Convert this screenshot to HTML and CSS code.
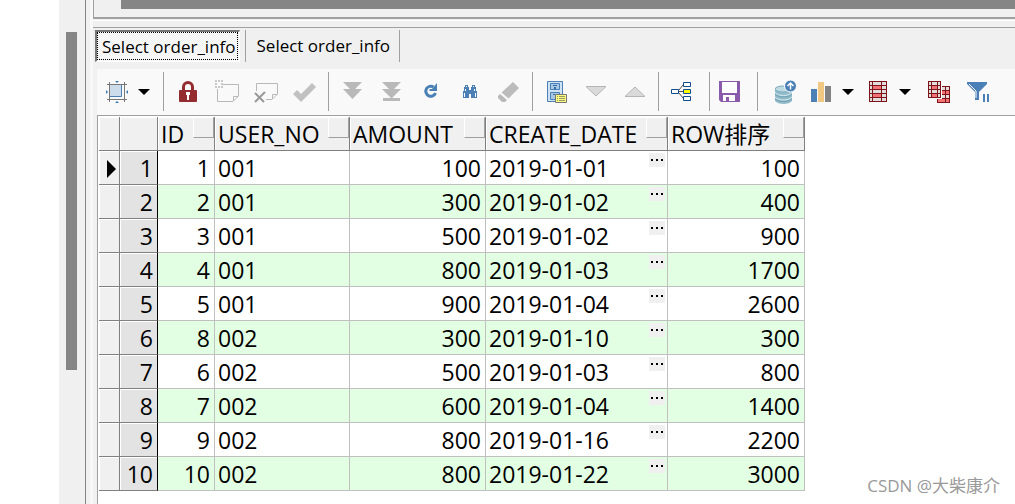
FILE: index.html
```
<!DOCTYPE html>
<html lang="zh-CN">
<head>
  <meta charset="UTF-8">
  <meta name="viewport" content="width=device-width, initial-scale=1.0">
  <title>Select order_info</title>
  <link rel="stylesheet" href="styles.css">
</head>
<body>
  <div class="page-margin"></div>
  <aside class="side-panel">
    <div class="scroll-thumb"></div>
  </aside>
  <div class="splitter"></div>

  <main class="workspace">
    <div class="editor-edge">
      <div class="editor-scrollbar"></div>
    </div>

    <section class="results">
      <nav class="tabs">
        <button type="button" class="tab active"><span>Select order_info</span></button>
        <button type="button" class="tab">Select order_info</button>
      </nav>

      <div class="result-body">
        <!-- Toolbar -->
        <div class="toolbar">
          <div class="tool-group first">
            <button type="button" class="tool split" aria-label="Grid size">
              <svg width="22" height="22" viewBox="0 0 22 22">
                <rect x="4" y="4" width="12" height="12" fill="#cddcea"/>
                <path d="M4 3.5H15.500V15.500H4" fill="none" stroke="#4a80b5"/>
                <path d="M1 3.500H21M1 18.500H21M3.500 1V21M18.500 1V21" stroke="#777" fill="none"/>
                <path d="M9 0h4l-2 2zM9 22h4l-2-2zM0 9v4l2-2zM22 9v4l-2-2z" fill="#3f78b3"/>
              </svg>
            </button>
            <button type="button" class="drop" aria-label="Grid size menu"><span class="caret"></span></button>
          </div>

          <div class="tool-group">
            <button type="button" class="tool" aria-label="Lock">
              <svg width="18" height="22" viewBox="0 0 18 22">
                <path d="M4.500 10V6a4.500 4.500 0 0 1 9 0v4" fill="none" stroke="#932d30" stroke-width="3"/>
                <rect y="9" width="18" height="12" rx="1" fill="#932d30"/>
                <path d="M7 11h4v3h-1v5H8v-5H7z" fill="#fff"/>
              </svg>
            </button>
            <button type="button" class="tool" aria-label="Insert record">
              <svg width="26" height="26" viewBox="0 0 26 26">
                <path d="M3.500 10V22.500H19L24.500 17V5.500H9M19.500 22V17.500H24" fill="none" stroke="#b8b8b8"/>
                <path d="M1 1h2v2H1zM4 1h2v2H4zM7 1h2v2H7zM1 4h2v2H1zM7 4h2v2H7zM1 7h2v2H1zM4 7h2v2H4zM7 7h2v2H7z" fill="#c8c8c8"/>
              </svg>
            </button>
            <button type="button" class="tool" aria-label="Delete record">
              <svg width="24" height="22" viewBox="0 0 24 22">
                <path d="M2.500 10V2.500H23.500V13L18 18.500H12M18.500 18V13.500H23" fill="none" stroke="#b8b8b8"/>
                <path d="M1 12L10 21M11 11L1 21" stroke="#999" stroke-width="2" fill="none"/>
              </svg>
            </button>
            <button type="button" class="tool" aria-label="Post changes">
              <svg width="24" height="20" viewBox="0 0 24 20">
                <path d="M0 12l4-4 4 4L19 1l4 4L8 20z" fill="#c1c1c1"/>
              </svg>
            </button>
          </div>

          <div class="tool-group">
            <button type="button" class="tool" aria-label="Fetch next page">
              <svg width="20" height="20" viewBox="0 0 20 20">
                <path d="M0 0h19l-7 7h7l-9.500 10L0 7h7z" fill="#b9b9b9"/>
              </svg>
            </button>
            <button type="button" class="tool" aria-label="Fetch last page">
              <svg width="20" height="20" viewBox="0 0 20 20">
                <path d="M0 0h19l-7 7h7l-9 9h8v3H1v-3h8L0 7h7z" fill="#b9b9b9"/>
              </svg>
            </button>
            <button type="button" class="tool" aria-label="Refresh">
              <svg width="16" height="18" viewBox="0 0 16 18">
                <path d="M10.500 4A5 5 0 1 0 12.500 10" fill="none" stroke="#4a80b5" stroke-width="3"/>
                <path d="M14 0v8H6.500V6H9L11.500 3z" fill="#4a80b5"/>
              </svg>
            </button>
            <button type="button" class="tool" aria-label="Find">
              <svg width="16" height="16" viewBox="0 0 16 16">
                <path d="M3 1h3v2h1v3h2V3h1V1h3v2h1v4h1v7H9v-4H7v4H1V7h1V3h1z" fill="#4a80b5"/>
                <path d="M4 2h1v1H4zM11 2h1v1h-1zM3 5h1v2H3zM12 5h1v2h-1zM2 9h1v4H2zM13 9h1v4h-1z" fill="#fff"/>
              </svg>
            </button>
            <button type="button" class="tool" aria-label="Clear">
              <svg width="24" height="22" viewBox="0 0 24 22">
                <path d="M16 1l6 6-10.500 10.500-7-6z" fill="#bcbcbc"/>
                <path d="M3 13l7 6-2 2H5l-4-4v-2z" fill="#b9b9b9"/>
              </svg>
            </button>
          </div>

          <div class="tool-group">
            <button type="button" class="tool" aria-label="Single record view">
              <svg width="20" height="22" viewBox="0 0 20 22">
                <path d="M.5.500H15.500V20.500H.500z" fill="#cfe3f5" stroke="#4a80b5"/>
                <path d="M3.500 2.500H12.500V8.500H3.500zM3.500 11.500H12.500V18.500H3.500z" fill="#a9c8e4" stroke="#4a80b5"/>
                <path d="M6 4h4v1H6zM7 6h2v2H7zM6 13h2v1H6z" fill="#2f6ca8"/>
                <path d="M8.500 13.500H19.500V21.500H8.500z" fill="#ffff80" stroke="#777"/>
                <path d="M10 15.500h1M12 15.500h6M10 17.500h1M12 17.500h6M10 19.500h1M12 19.500h6" stroke="#999966"/>
              </svg>
            </button>
            <button type="button" class="tool" aria-label="Next record">
              <svg width="22" height="20" viewBox="0 0 22 20">
                <path d="M1 4.500H21L11 14z" fill="#dadada" stroke="#b5b5b5"/>
              </svg>
            </button>
            <button type="button" class="tool" aria-label="Previous record">
              <svg width="22" height="20" viewBox="0 0 22 20">
                <path d="M1 14.500H21L11 5z" fill="#dadada" stroke="#b5b5b5"/>
              </svg>
            </button>
          </div>

          <div class="tool-group loose">
            <button type="button" class="tool" aria-label="Linked query">
              <svg width="22" height="22" viewBox="0 0 22 22">
                <path d="M7 10.500h5M8 9L12 4M8 12l4 5" stroke="#555" fill="none"/>
                <path d="M.5 8.500h7v4h-7zM12.500 1.500h7v4h-7zM12.500 15.500h7v4h-7z" fill="#fff" stroke="#0f4d8c"/>
                <path d="M12.500 8.500h7v4h-7z" fill="#ff0" stroke="#0f4d8c"/>
              </svg>
            </button>
          </div>

          <div class="tool-group save">
            <button type="button" class="tool" aria-label="Export data">
              <svg width="21" height="21" viewBox="0 0 21 21">
                <path d="M0 0h21v21H2L0 19z" fill="#8b5bab"/>
                <path d="M3 1h15v11H3zM4 14h12v6H4z" fill="#fff"/>
                <path d="M7 16h3v4H7zM19 1h1v2h-1z" fill="#8b5bab"/>
              </svg>
            </button>
          </div>

          <div class="tool-group last">
            <button type="button" class="tool" aria-label="Send to database">
              <svg width="22" height="24" viewBox="0 0 22 24">
                <path d="M0 9v12c3 4 14 4 17 0V9z" fill="#93bccb"/>
                <ellipse cx="8.500" cy="9" rx="8.500" ry="3" fill="#bfdce5" stroke="#79a9bb"/>
                <path d="M0 12.500c3 4 14 4 17 0M0 17c3 4 14 4 17 0" fill="none" stroke="#d6e9ef"/>
                <path d="M0 14c3 4 14 4 17 0M0 18.500c3 4 14 4 17 0" fill="none" stroke="#6d9fb2"/>
                <circle cx="15.500" cy="6" r="6" fill="#4a80b5" stroke="#fff"/>
                <path d="M15.500 9.500V3M12.500 6l3-3 3 3" fill="none" stroke="#fff" stroke-width="1.500"/>
              </svg>
            </button>
            <button type="button" class="tool split" aria-label="Chart">
              <svg width="20" height="20" viewBox="0 0 20 20">
                <path d="M0 7h6v13H0z" fill="#4a80b5"/>
                <path d="M7 0h6v20H7z" fill="#f0c882"/>
                <path d="M14 4h6v16h-6z" fill="#838383"/>
              </svg>
            </button>
            <button type="button" class="drop" aria-label="Chart menu"><span class="caret"></span></button>
            <button type="button" class="tool split" aria-label="Table">
              <svg width="18" height="22" viewBox="0 0 18 22">
                <path d="M0 0h18v21H0z" fill="#7d1518"/>
                <path d="M1 1h2v3H1zM4 1h8v3H4zM13 1h4v3h-4zM1 9h2v3H1zM4 9h8v3H4zM13 9h4v3h-4zM1 17h2v3H1zM4 17h8v3H4zM13 17h4v3h-4zM1 5h2v3H1zM13 5h4v3h-4zM1 13h2v3H1zM13 13h4v3h-4z" fill="#e2dddd"/>
                <path d="M4 5h8v3H4zM4 9h8v3H4zM4 17h8v3H4z" fill="#f27278"/>
                <path d="M4 9h8v3H4z" fill="#e2dddd"/>
                <path d="M4 13h8v3H4z" fill="#f27278"/>
                <path d="M4 17h8v3H4z" fill="#e2dddd"/>
              </svg>
            </button>
            <button type="button" class="drop" aria-label="Table menu"><span class="caret"></span></button>
            <button type="button" class="tool" aria-label="Copy table">
              <svg width="22" height="22" viewBox="0 0 22 22">
                <path d="M9 5h13v17H9z" fill="#7d1518"/>
                <path d="M10 10h7v3h-7zM18 10h3v3h-3zM10 18h7v3h-7zM18 18h3v3h-3z" fill="#f27278"/>
                <path d="M14 6h3v3h-3zM18 6h3v3h-3zM10 14h7v3h-7zM18 14h3v3h-3z" fill="#e2dddd"/>
                <path d="M0 0h14v18H0z" fill="#f9f9f9"/>
                <path d="M0 0h13v17H0z" fill="#7d1518"/>
                <path d="M1 1h2v3H1zM4 1h5v3H4zM10 1h2v3h-2zM1 9h2v3H1zM4 9h5v3H4zM10 9h2v3h-2zM1 5h2v3H1zM10 5h2v3h-2zM1 13h2v3H1zM10 13h2v3h-2z" fill="#e2dddd"/>
                <path d="M4 5h5v3H4zM4 13h5v3H4z" fill="#f27278"/>
              </svg>
            </button>
            <button type="button" class="tool" aria-label="Filter">
              <svg width="22" height="22" viewBox="0 0 22 22">
                <path d="M0 1h20v2l-8 8v8H8v-8L0 3z" fill="#4a80b5"/>
                <path d="M2 3l7 7v7" fill="none" stroke="#fff"/>
                <path d="M16 13h2v8h-2zM20 13h2v8h-2z" fill="#4a80b5"/>
              </svg>
            </button>
          </div>
        </div>

        <!-- Query result -->
        <div class="grid-wrap">
          <table class="grid">
            <colgroup>
              <col class="col-mark"><col class="col-num"><col class="col-id"><col class="col-user">
              <col class="col-amount"><col class="col-date"><col class="col-row">
            </colgroup>
            <thead>
              <tr>
                <th></th>
                <th></th>
                <th>ID<button type="button" class="sort" aria-label="Sort ID"></button></th>
                <th>USER_NO<button type="button" class="sort" aria-label="Sort USER_NO"></button></th>
                <th>AMOUNT<button type="button" class="sort" aria-label="Sort AMOUNT"></button></th>
                <th>CREATE_DATE<button type="button" class="sort" aria-label="Sort CREATE_DATE"></button></th>
                <th>ROW排序<button type="button" class="sort" aria-label="Sort ROW"></button></th>
              </tr>
            </thead>
            <tbody>
              <tr><td class="mark"><span class="current"></span></td><td class="line">1</td><td class="num">1</td><td>001</td><td class="num">100</td><td class="date">2019-01-01<button type="button" class="more" aria-label="Edit date"></button></td><td class="num">100</td></tr>
              <tr><td class="mark"></td><td class="line">2</td><td class="num">2</td><td>001</td><td class="num">300</td><td class="date">2019-01-02<button type="button" class="more" aria-label="Edit date"></button></td><td class="num">400</td></tr>
              <tr><td class="mark"></td><td class="line">3</td><td class="num">3</td><td>001</td><td class="num">500</td><td class="date">2019-01-02<button type="button" class="more" aria-label="Edit date"></button></td><td class="num">900</td></tr>
              <tr><td class="mark"></td><td class="line">4</td><td class="num">4</td><td>001</td><td class="num">800</td><td class="date">2019-01-03<button type="button" class="more" aria-label="Edit date"></button></td><td class="num">1700</td></tr>
              <tr><td class="mark"></td><td class="line">5</td><td class="num">5</td><td>001</td><td class="num">900</td><td class="date">2019-01-04<button type="button" class="more" aria-label="Edit date"></button></td><td class="num">2600</td></tr>
              <tr><td class="mark"></td><td class="line">6</td><td class="num">8</td><td>002</td><td class="num">300</td><td class="date">2019-01-10<button type="button" class="more" aria-label="Edit date"></button></td><td class="num">300</td></tr>
              <tr><td class="mark"></td><td class="line">7</td><td class="num">6</td><td>002</td><td class="num">500</td><td class="date">2019-01-03<button type="button" class="more" aria-label="Edit date"></button></td><td class="num">800</td></tr>
              <tr><td class="mark"></td><td class="line">8</td><td class="num">7</td><td>002</td><td class="num">600</td><td class="date">2019-01-04<button type="button" class="more" aria-label="Edit date"></button></td><td class="num">1400</td></tr>
              <tr><td class="mark"></td><td class="line">9</td><td class="num">9</td><td>002</td><td class="num">800</td><td class="date">2019-01-16<button type="button" class="more" aria-label="Edit date"></button></td><td class="num">2200</td></tr>
              <tr><td class="mark"></td><td class="line">10</td><td class="num">10</td><td>002</td><td class="num">800</td><td class="date">2019-01-22<button type="button" class="more" aria-label="Edit date"></button></td><td class="num">3000</td></tr>
            </tbody>
          </table>
        </div>
      </div>
    </section>
  </main>

  <div class="watermark">CSDN @大柴康介</div>
</body>
</html>
```
FILE: styles.css
```
* {
  margin: 0;
  padding: 0;
  box-sizing: border-box;
}

body {
  display: flex;
  height: 100vh;
  overflow: hidden;
  background: #fff;
  color: #000;
  font-family: "Open Sans", "Noto Sans CJK SC", sans-serif;
}

button {
  border: none;
  background: none;
  font-family: inherit;
  color: inherit;
}

/* Left side */
.page-margin {
  flex: 0 0 59px;
}

.side-panel {
  flex: 0 0 26px;
  padding: 32px 8px 0 7px;
  background: #f0f0f0;
}

.scroll-thumb {
  height: 67vh;
  background: #858585;
}

.splitter {
  flex: 0 0 8px;
  border-left: 1px solid #858585;
  border-right: 3px solid #f8f8f8;
  background: #f0f0f0;
}

/* Right side */
.workspace {
  flex: 1;
  min-width: 0;
  display: flex;
  flex-direction: column;
  background: #f0f0f0;
}

.editor-edge {
  flex: 0 0 19px;
  padding-left: 27px;
  border-left: 1px solid #a0a0a0;
  border-bottom: 2px solid #a0a0a0;
}

.editor-scrollbar {
  height: 9px;
  background: #858585;
}

.results {
  flex: 1;
  display: flex;
  flex-direction: column;
  margin-top: 1px;
  padding-top: 6px;
  border-top: 1px solid #fff;
}

.tabs {
  display: flex;
  height: 42px;
  padding: 2px 0 7px 2px;
  border-top: 1px solid #a0a0a0;
}

.tab {
  padding: 0 9px 0 11px;
  border-right: 1px solid #a0a0a0;
  font-size: 17px;
  line-height: 24px;
  white-space: nowrap;
}

.tab.active {
  padding: 0 5px 0 0;
}

.tab.active span {
  display: flex;
  align-items: center;
  height: 32px;
  padding: 0 3px 0 5px;
  border: 2px solid #777;
  border-right: 1px solid #fff;
  border-bottom: 1px solid #fff;
  outline: 1px dotted #000;
  outline-offset: -3px;
  background: repeating-conic-gradient(#fff 0 25%, #f0f0f0 0 50%) 0 0 / 2px 2px;
}

.result-body {
  flex: 1;
  margin-left: 4px;
  background: #f9f9f9;
  display: flex;
  flex-direction: column;
}

/* Toolbar */
.toolbar {
  display: flex;
  height: 46px;
  padding: 3px 0 4px;
}

.tool-group {
  display: flex;
  align-items: center;
  padding: 0 4px;
  border-right: 1px solid #a0a0a0;
}

.tool-group.first {
  padding: 0 5px 0 4px;
}

.tool-group.loose {
  padding: 0 8px 0 3px;
}

.tool-group.save {
  padding: 0 8px 0 0;
}

.tool-group.last {
  padding-left: 8px;
  border-right: none;
}

.tool,
.drop {
  display: flex;
  align-items: center;
  justify-content: center;
  width: 39px;
  height: 36px;
}

.tool.split {
  width: 32px;
}

.drop {
  width: 22px;
  margin-right: 3px;
}

.caret {
  border: 6px solid transparent;
  border-top-color: #000;
  border-bottom: none;
}

/* Result grid */
.grid-wrap {
  flex: 1;
  padding: 1px 0 0 1px;
  border-top: 1px solid #a0a0a0;
  border-left: 1px solid #a0a0a0;
  background: #fff;
}

.grid {
  table-layout: fixed;
  width: 706px;
  border-collapse: separate;
  border-spacing: 0;
  font-size: 23px;
  line-height: 31px;
}

.col-mark { width: 21px; }
.col-num { width: 38px; }
.col-id { width: 57px; }
.col-user { width: 135px; }
.col-amount { width: 136px; }
.col-date { width: 182px; }
.col-row { width: 137px; }

.grid th,
.grid td {
  position: relative;
  height: 34px;
  padding: 2px 4px 0 3px;
  border-right: 1px solid #c0c0c0;
  border-bottom: 1px solid #c0c0c0;
  white-space: nowrap;
}

.grid th {
  border-color: #808080;
  background: #f0f0f0;
  font-weight: normal;
  text-align: left;
  box-shadow: inset 1px 1px #fff;
}

.grid tbody tr:nth-child(even) {
  background: #e3ffe3;
}

.grid .num,
.grid .line {
  text-align: right;
}

.grid .mark,
.grid .line {
  border-color: #808080;
  background: #f0f0f0;
  box-shadow: inset 1px 1px #fff;
}

.grid .line {
  border-right-color: #000;
  background: #e3e3e3;
}

.current {
  display: block;
  width: 0;
  margin-left: 5px;
  border: 9px solid transparent;
  border-left-color: #000;
  border-right: none;
}

.sort {
  position: absolute;
  top: 0;
  right: 0;
  width: 21px;
  height: 21px;
  border: 1px solid #fff;
  border-right-color: #a0a0a0;
  border-bottom-color: #a0a0a0;
  background: #f0f0f0;
}

.more {
  position: absolute;
  top: 2px;
  right: 2px;
  width: 16px;
  height: 14px;
  background: #f0f0f0;
}

.more::before {
  content: "";
  display: block;
  width: 2px;
  height: 2px;
  margin: 0 auto;
  background: #000;
  box-shadow: -5px 0 #000, 5px 0 #000;
}

.watermark {
  position: absolute;
  right: 15px;
  bottom: 6px;
  color: #999;
  font-size: 17px;
  line-height: 24px;
}
```
